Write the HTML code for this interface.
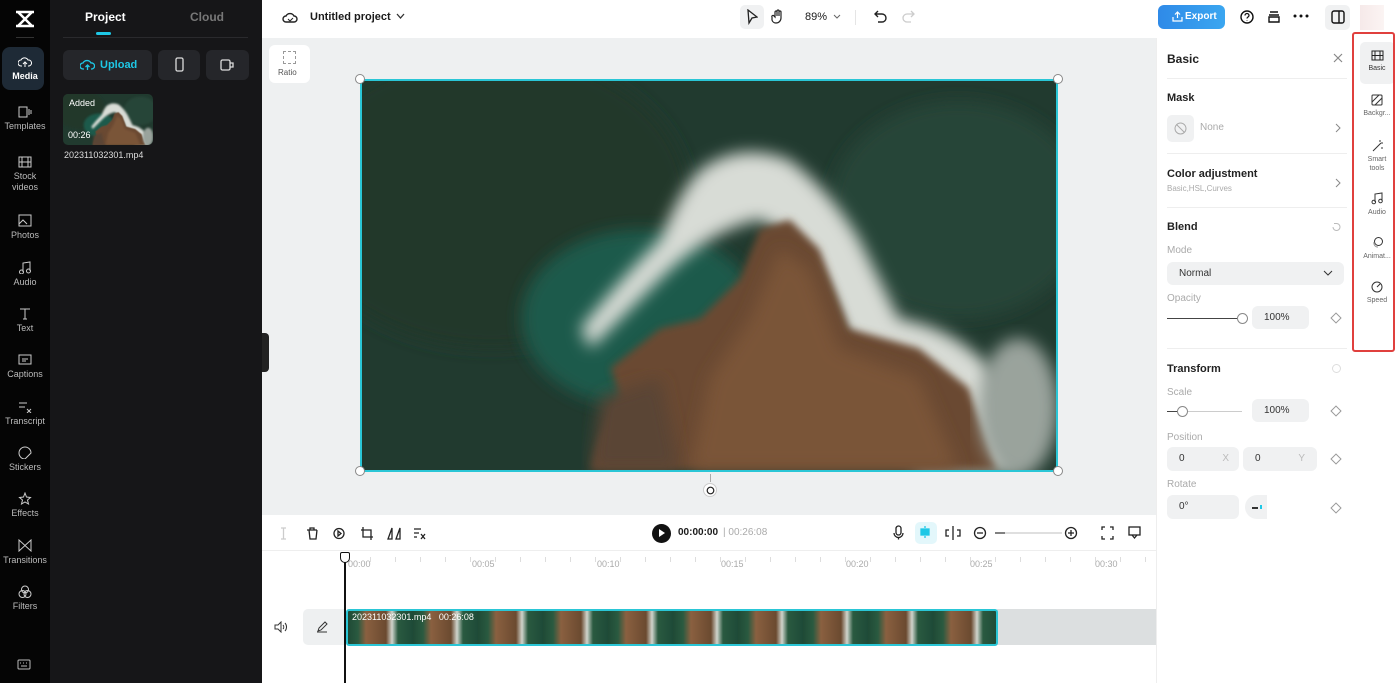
<!DOCTYPE html>
<html><head><meta charset="utf-8"><style>
*{box-sizing:border-box;margin:0;padding:0}
body{width:1398px;height:683px;overflow:hidden;font-family:"Liberation Sans",Arial,sans-serif;background:#fff;position:relative;font-size:12px;color:#1a1a1a}
.abs{position:absolute}
#nav{left:0;top:0;width:50px;height:683px;background:#050505}
.ni{position:absolute;left:0;width:50px;text-align:center;color:#bbb;font-size:9px;line-height:11px}
.ni svg{display:block;margin:0 auto 3px}
#panel{left:50px;top:0;width:212px;height:683px;background:#161618}
#top{left:262px;top:0;width:1136px;height:38px;background:#fff}
#canvas{left:262px;top:38px;width:894px;height:477px;background:#eef0f1}
#rp{left:1156px;top:38px;width:200px;height:645px;background:#fff;border-left:1px solid #eee}
.lbl{position:absolute;color:#aaa;font-size:11px}
.h{position:absolute;font-weight:bold;font-size:11px;color:#222}
.box{position:absolute;background:#f0f1f2;border-radius:6px;font-size:11px;color:#333;padding-left:12px;line-height:24px}
.dia{position:absolute;width:8px;height:8px;border:1px solid #999;transform:rotate(45deg)}
.sep{position:absolute;left:10px;width:180px;height:1px;background:#eee}
.si{position:absolute;left:1358px;width:38px;text-align:center;font-size:7px;color:#666;line-height:9px}
.si svg{display:block;margin:0 auto 3px}
.tk{position:absolute;top:559px;font-size:9px;color:#aaa}
.h4{position:absolute;width:10px;height:10px;border-radius:50%;background:#fff;border:1px solid #888}
</style></head><body>
<div id="nav" class="abs">
 <svg class="abs" style="left:13px;top:9px" width="24" height="20" viewBox="0 0 24 20"><path d="M3 3h18M3 17h18M5 3l14 14M19 3L5 17" stroke="#fff" stroke-width="2.5" fill="none"/></svg>
 <div class="abs" style="left:16px;top:37px;width:18px;height:1px;background:#333"></div>
 <div class="abs" style="left:2px;top:47px;width:42px;height:43px;background:#1e2a36;border-radius:8px"></div>
 <div class="ni" style="top:56px;color:#fff;font-weight:bold"><svg width="14" height="12" viewBox="0 0 14 12"><path d="M4 10H3a3 3 0 010-6 4 4 0 017 0 3 3 0 011 6h-1M7 11V6M5 8l2-2 2 2" stroke="#fff" fill="none"/></svg>Media</div>
 <div class="ni" style="top:106px"><svg width="14" height="12"><rect x="1" y="1" width="8" height="10" stroke="#ccc" fill="none"/><path d="M11 3v6M13 4v4" stroke="#ccc"/></svg>Templates</div>
 <div class="ni" style="top:156px"><svg width="14" height="12"><rect x="1" y="1" width="12" height="10" stroke="#ccc" fill="none"/><path d="M4 1v10M10 1v10M1 6h12" stroke="#ccc"/></svg>Stock<br>videos</div>
 <div class="ni" style="top:214px"><svg width="14" height="13"><rect x="1" y="1" width="12" height="11" stroke="#ccc" fill="none"/><path d="M1 10l4-4 4 4" stroke="#ccc" fill="none"/></svg>Photos</div>
 <div class="ni" style="top:261px"><svg width="14" height="13"><path d="M5 11V2l7-1v9" stroke="#ccc" fill="none"/><circle cx="3.5" cy="11" r="2" stroke="#ccc" fill="none"/><circle cx="10.5" cy="10" r="2" stroke="#ccc" fill="none"/></svg>Audio</div>
 <div class="ni" style="top:307px"><svg width="14" height="13"><path d="M2 2h10M7 2v10M5 12h4" stroke="#ccc" fill="none"/></svg>Text</div>
 <div class="ni" style="top:353px"><svg width="14" height="13"><rect x="1" y="2" width="12" height="9" stroke="#ccc" fill="none"/><path d="M4 6h6M4 8h4" stroke="#ccc"/></svg>Captions</div>
 <div class="ni" style="top:400px"><svg width="14" height="13"><path d="M1 3h8M1 7h6M9 9l4 4M13 9l-4 4" stroke="#ccc" fill="none"/></svg>Transcript</div>
 <div class="ni" style="top:446px"><svg width="14" height="13"><path d="M7 1a6 6 0 100 12l6-6A6 6 0 007 1z" stroke="#ccc" fill="none"/></svg>Stickers</div>
 <div class="ni" style="top:492px"><svg width="14" height="13"><path d="M7 1l1.5 4 4 .5-3 2.5 1 4L7 10l-3.5 2 1-4-3-2.5 4-.5z" stroke="#ccc" fill="none"/></svg>Effects</div>
 <div class="ni" style="top:539px"><svg width="14" height="13"><path d="M1 1v11l6-5.5L13 12V1L7 6.5z" stroke="#ccc" fill="none"/></svg>Transitions</div>
 <div class="ni" style="top:585px"><svg width="14" height="13"><circle cx="7" cy="4.5" r="3.5" stroke="#ccc" fill="none"/><circle cx="4.5" cy="9" r="3.5" stroke="#ccc" fill="none"/><circle cx="9.5" cy="9" r="3.5" stroke="#ccc" fill="none"/></svg>Filters</div>
 <svg class="abs" style="left:17px;top:659px" width="14" height="11"><rect x="1" y="1" width="12" height="9" rx="1" stroke="#bbb" fill="none"/><path d="M3 4h1M6 4h1M9 4h1M4 7h6" stroke="#bbb"/></svg>
</div>
<div id="panel" class="abs">
 <div class="abs" style="left:35px;top:10px;color:#fff;font-weight:bold;font-size:12px">Project</div>
 <div class="abs" style="left:140px;top:10px;color:#777;font-weight:bold;font-size:12px">Cloud</div>
 <div class="abs" style="left:46px;top:32px;width:15px;height:3px;background:#1ec8e6;border-radius:2px"></div>
 <div class="abs" style="left:13px;top:37px;width:185px;height:1px;background:#2a2a2d"></div>
 <div class="abs" style="left:13px;top:50px;width:89px;height:30px;background:#25262a;border-radius:6px;color:#1ec8e6;font-weight:bold;font-size:11px;line-height:30px;padding-left:37px">Upload</div>
 <svg class="abs" style="left:30px;top:58px" width="15" height="13"><path d="M4 11H3a3 3 0 010-6 4.5 4.5 0 018 0 3 3 0 011 6h-1M7.5 12V7M5.5 9l2-2 2 2" stroke="#1ec8e6" stroke-width="1.3" fill="none"/></svg>
 <div class="abs" style="left:108px;top:50px;width:42px;height:30px;background:#25262a;border-radius:6px"></div>
 <svg class="abs" style="left:125px;top:57px" width="9" height="15"><rect x="1" y="1" width="7" height="13" rx="1.5" stroke="#ddd" stroke-width="1.3" fill="none"/></svg>
 <div class="abs" style="left:156px;top:50px;width:43px;height:30px;background:#25262a;border-radius:6px"></div>
 <svg class="abs" style="left:170px;top:59px" width="15" height="12"><rect x="1" y="1" width="9" height="10" rx="1.5" stroke="#ddd" stroke-width="1.3" fill="none"/><path d="M10 4h3v4h-3" stroke="#ddd" stroke-width="1.3" fill="none"/></svg>
 <svg class="abs" style="left:13px;top:94px;border-radius:5px" width="90" height="51" viewBox="0 0 698 393" preserveAspectRatio="none"><use href="#vid"/></svg>
 <div class="abs" style="left:19px;top:98px;color:#fff;font-size:9px">Added</div>
 <div class="abs" style="left:18px;top:130px;color:#fff;font-size:9px">00:26</div>
 <div class="abs" style="left:14px;top:150px;color:#ddd;font-size:9px">202311032301.mp4</div>
</div>
<div class="abs" style="left:262px;top:333px;width:7px;height:39px;background:#222;border-radius:0 4px 4px 0;z-index:3"></div>
<div id="top" class="abs">
 <svg class="abs" style="left:20px;top:9px" width="16" height="16"><path d="M4 13a3 3 0 010-6 4.5 4.5 0 018 0 3 3 0 010 6z" stroke="#222" stroke-width="1.4" fill="none"/><path d="M6 10l2 2 3-3" stroke="#222" fill="none"/></svg>
 <div class="abs" style="left:48px;top:11px;font-weight:bold;font-size:11px">Untitled project</div>
 <svg class="abs" style="left:134px;top:13px" width="9" height="7"><path d="M1 1l3.5 4L8 1" stroke="#333" stroke-width="1.3" fill="none"/></svg>
 <div class="abs" style="left:478px;top:5px;width:24px;height:24px;background:#f0f1f2;border-radius:5px"></div>
 <svg class="abs" style="left:484px;top:9px" width="12" height="16"><path d="M2 1l9 7-5 1-3 5z" stroke="#222" stroke-width="1.3" fill="none"/></svg>
 <svg class="abs" style="left:509px;top:9px" width="14" height="15"><path d="M4 8V3a1 1 0 012 0v4V2a1 1 0 012 0v5V3a1 1 0 012 0v6a5 5 0 01-5 5 4 4 0 01-4-3L1 8a1 1 0 012-1z" stroke="#222" stroke-width="1.2" fill="none"/></svg>
 <div class="abs" style="left:543px;top:11px;font-size:11px">89%</div>
 <svg class="abs" style="left:571px;top:14px" width="8" height="6"><path d="M1 1l3 3 3-3" stroke="#666" fill="none"/></svg>
 <div class="abs" style="left:593px;top:10px;width:1px;height:15px;background:#e5e5e5"></div>
 <svg class="abs" style="left:612px;top:10px" width="13" height="13"><path d="M4 1L1 4l3 3M1 4h7a4 4 0 010 8H4" stroke="#222" stroke-width="1.4" fill="none"/></svg>
 <svg class="abs" style="left:640px;top:10px" width="13" height="13"><path d="M9 1l3 3-3 3M12 4H5a4 4 0 000 8h4" stroke="#ccc" stroke-width="1.3" fill="none"/></svg>
 <div class="abs" style="left:896px;top:5px;width:67px;height:24px;background:linear-gradient(90deg,#2f8ae8,#3aa6f0);border-radius:6px;color:#fff;font-weight:bold;font-size:10px;line-height:24px;padding-left:27px">Export</div>
 <svg class="abs" style="left:910px;top:11px" width="11" height="11"><path d="M5.5 1v6M3 3.5l2.5-2.5L8 3.5M1 6v4h9V6" stroke="#fff" stroke-width="1.2" fill="none"/></svg>
 <svg class="abs" style="left:978px;top:10px" width="14" height="14"><circle cx="7" cy="7" r="6" stroke="#111" stroke-width="1.4" fill="none"/><path d="M5 5.5a2 2 0 114 0c0 1.5-2 1.5-2 3M7 10.5v.5" stroke="#111" stroke-width="1.3" fill="none"/></svg>
 <svg class="abs" style="left:1005px;top:10px" width="14" height="14"><path d="M3 2h8M2 5h10M2 7h10v5H2z" stroke="#111" stroke-width="1.4" fill="none"/></svg>
 <svg class="abs" style="left:1031px;top:14px" width="16" height="4"><circle cx="2" cy="2" r="1.5" fill="#111"/><circle cx="8" cy="2" r="1.5" fill="#111"/><circle cx="14" cy="2" r="1.5" fill="#111"/></svg>
 <div class="abs" style="left:1063px;top:5px;width:25px;height:25px;background:#f0f1f2;border-radius:5px"></div>
 <svg class="abs" style="left:1069px;top:10px" width="14" height="14"><rect x="1" y="1" width="12" height="12" rx="2" stroke="#111" stroke-width="1.4" fill="none"/><path d="M8 1v12" stroke="#111" stroke-width="1.4"/></svg>
 <div class="abs" style="left:1098px;top:5px;width:24px;height:25px;background:linear-gradient(90deg,#f6e9e9,#fbf4f3)"></div>
</div>
<div id="canvas" class="abs">
 <div class="abs" style="left:7px;top:7px;width:41px;height:38px;background:#fff;border-radius:6px"></div>
 <div class="abs" style="left:21px;top:13px;width:13px;height:13px;border:1px dashed #999"></div>
 <div class="abs" style="left:16px;top:30px;font-size:8px;color:#555">Ratio</div>
 <div class="abs" style="left:98px;top:41px;width:698px;height:393px;border:2px solid #2ac6d6;overflow:hidden">
 <svg width="694" height="389" viewBox="0 0 698 393" preserveAspectRatio="none" style="display:block">
  <defs>
   <filter id="b8"><feGaussianBlur stdDeviation="8"/></filter>
   <filter id="b4"><feGaussianBlur stdDeviation="4"/></filter>
   <g id="vid">
    <rect width="698" height="393" fill="#213a2f"/>
    <ellipse cx="130" cy="120" rx="200" ry="150" fill="#23382c" filter="url(#b8)"/>
    <ellipse cx="280" cy="240" rx="120" ry="90" fill="#1f5a4b" filter="url(#b8)"/>
    <ellipse cx="600" cy="130" rx="130" ry="110" fill="#264537" filter="url(#b8)"/>
    <path d="M340 90 Q380 60 430 80 Q470 110 500 160 Q520 200 540 240 Q600 250 640 300 L660 393 L560 393 Q500 300 470 220 Q440 160 400 140 Q350 150 300 200 Q260 240 230 270 L220 250 Q260 200 300 160 Q320 110 340 90Z" fill="#d8dcd6" filter="url(#b8)"/>
    <path d="M400 150 L430 140 L460 170 L490 250 L560 270 L610 310 L640 393 L230 393 L240 360 L260 320 L250 290 L300 250 L340 240 L380 200 Z" fill="#6b4a32" filter="url(#b4)"/>
    <path d="M420 170 L450 190 L480 270 L560 300 L600 393 L330 393 L350 300 L390 240 Z" fill="#7a5438" filter="url(#b8)"/>
    <path d="M240 320 L300 300 L320 393 L230 393Z" fill="#5a4535" filter="url(#b8)"/>
    <ellipse cx="660" cy="330" rx="40" ry="70" fill="#9aa39c" filter="url(#b8)"/>
   </g>
  </defs>
  <use href="#vid"/>
 </svg>
 </div>
 <div class="h4" style="left:93px;top:36px"></div><div class="h4" style="left:791px;top:36px"></div>
 <div class="h4" style="left:93px;top:428px"></div><div class="h4" style="left:791px;top:428px"></div>
 <div class="abs" style="left:448px;top:436px;width:1px;height:8px;background:#aaa"></div>
 <div class="abs" style="left:441px;top:445px;width:14px;height:14px;border-radius:50%;background:#fff;border:1px solid #ccc"></div>
 <svg class="abs" style="left:444px;top:448px" width="9" height="9"><circle cx="4.5" cy="4.5" r="3.3" stroke="#222" stroke-width="1.2" fill="none"/></svg>
</div>
<!-- timeline -->
<div class="abs" style="left:262px;top:515px;width:894px;height:168px;background:#fff"></div>
<div class="abs" style="left:262px;top:550px;width:894px;height:1px;background:#eee"></div>
<svg class="abs" style="left:278px;top:526px" width="150" height="15" fill="none" stroke="#222" stroke-width="1.3">
 <path d="M3 2h5M3 13h5M5.5 2v11" stroke="#ccc"/>
 <path d="M29 4h10M31 4l1 9h6l1-9M32 4V2h4v2"/>
 <circle cx="61" cy="7.5" r="5"/><path d="M60 5l3 2.5-3 2.5z"/>
 <path d="M85 1v10h10M83 4h10v10"/>
 <path d="M110 13l4-11v11zM118 13l4-11v11z"/>
 <path d="M136 3h7M136 7h5M136 11h3M143 8l4 5M147 8l-4 5"/>
</svg>
<div class="abs" style="left:652px;top:524px;width:19px;height:19px;border-radius:50%;background:#111"></div>
<div class="abs" style="left:659px;top:529px;width:0;height:0;border-left:6px solid #fff;border-top:4.5px solid transparent;border-bottom:4.5px solid transparent"></div>
<div class="abs" style="left:678px;top:527px;font-size:10px;font-weight:bold">00:00:00</div>
<div class="abs" style="left:723px;top:527px;font-size:10px;color:#aaa">| 00:26:08</div>
<div class="abs" style="left:915px;top:522px;width:22px;height:22px;border-radius:5px;background:#e3f7fb"></div>
<svg class="abs" style="left:892px;top:525px" width="260" height="16" fill="none" stroke="#222" stroke-width="1.3">
 <rect x="4" y="1" width="5" height="9" rx="2.5"/><path d="M2 8a4.5 4.5 0 009 0M6.5 12.5v2"/>
 <rect x="29" y="4" width="8" height="6" fill="#1ec8e6" stroke="#1ec8e6"/><path d="M33 1v2M33 11v2" stroke="#1ec8e6"/>
 <path d="M61 1v14M57 5h-3v6h3M65 5h3v6h-3"/>
 <circle cx="88" cy="8" r="5.5"/><path d="M85 8h6"/>
 <path d="M103 8h67" stroke="#ccc"/><path d="M103 8h10" stroke="#444"/>
 <circle cx="179" cy="8" r="5.5"/><path d="M176 8h6M179 5v6"/>
 <path d="M210 5V2h3M218 2h3v3M221 11v3h-3M213 14h-3v-3"/>
 <rect x="237" y="2" width="11" height="8"/><path d="M240 10l2.5 3 2.5-3"/>
</svg>
<div class="tk" style="left:348px">00:00</div><div class="tk" style="left:472px">00:05</div><div class="tk" style="left:597px">00:10</div><div class="tk" style="left:721px">00:15</div><div class="tk" style="left:846px">00:20</div><div class="tk" style="left:970px">00:25</div><div class="tk" style="left:1095px">00:30</div>
<div class="abs" style="left:345px;top:557px;width:810px;height:5px;background:repeating-linear-gradient(90deg,#ddd 0 1px,transparent 1px 25px)"></div>
<svg class="abs" style="left:274px;top:621px" width="14" height="12"><path d="M1 4h3l3-3v10L4 8H1z" stroke="#333" fill="none"/><path d="M9 4a3 3 0 010 4M11 2a6 6 0 010 8" stroke="#333" fill="none"/></svg>
<div class="abs" style="left:303px;top:609px;width:42px;height:36px;background:#eef0f1;border-radius:5px 0 0 5px"></div>
<svg class="abs" style="left:316px;top:621px" width="12" height="12"><path d="M2 10l1-3 6-6 2 2-6 6zM1 11h10" stroke="#333" fill="none"/></svg>
<div class="abs" style="left:997px;top:609px;width:159px;height:36px;background:#dcdfe0"></div>
<div class="abs" style="left:346px;top:609px;width:652px;height:37px;border:2px solid #2ac6d6;border-radius:3px;
 background:repeating-linear-gradient(90deg,#1f4a36 0,#2a5a40 10px,#8a6040 18px,#6b4a30 38px,#d0d4cc 44px,#2a5a40 50px,#1e4a38 65px);"></div>
<div class="abs" style="left:352px;top:612px;font-size:9px;color:#fff">202311032301.mp4 &nbsp; 00:26:08</div>
<div class="abs" style="left:344px;top:556px;width:2px;height:127px;background:#111"></div>
<div class="abs" style="left:340px;top:552px;width:10px;height:11px;border:1.5px solid #111;border-radius:2px 2px 5px 5px;background:#fff"></div>
<!-- right panel -->
<div id="rp" class="abs">
 <div class="h" style="left:10px;top:14px;font-size:12px">Basic</div>
 <svg class="abs" style="left:176px;top:15px" width="10" height="10"><path d="M1 1l8 8M9 1l-8 8" stroke="#888" stroke-width="1.2"/></svg>
 <div class="sep" style="top:40px"></div>
 <div class="h" style="left:10px;top:54px">Mask</div>
 <div class="abs" style="left:10px;top:77px;width:27px;height:27px;background:#f0f1f2;border-radius:5px"></div>
 <svg class="abs" style="left:17px;top:84px" width="13" height="13"><circle cx="6.5" cy="6.5" r="5.5" stroke="#aaa" fill="none"/><path d="M2.5 2.5l8 8" stroke="#aaa"/></svg>
 <div class="lbl" style="left:43px;top:84px;font-size:10px">None</div>
 <svg class="abs" style="left:178px;top:85px" width="6" height="10"><path d="M1 1l4 4-4 4" stroke="#888" fill="none"/></svg>
 <div class="sep" style="top:115px"></div>
 <div class="h" style="left:10px;top:130px">Color adjustment</div>
 <div class="lbl" style="left:10px;top:146px;font-size:8px">Basic,HSL,Curves</div>
 <svg class="abs" style="left:178px;top:140px" width="6" height="10"><path d="M1 1l4 4-4 4" stroke="#888" fill="none"/></svg>
 <div class="sep" style="top:169px"></div>
 <div class="h" style="left:10px;top:183px">Blend</div>
 <svg class="abs" style="left:174px;top:184px" width="10" height="10"><path d="M2 5a3.5 3.5 0 103.5-3.5H3" stroke="#bbb" fill="none"/></svg>
 <div class="lbl" style="left:10px;top:207px;font-size:10px">Mode</div>
 <div class="box" style="left:10px;top:224px;width:177px;height:23px;line-height:23px;font-size:10px">Normal</div>
 <svg class="abs" style="left:166px;top:232px" width="10" height="7"><path d="M1 1l4 4 4-4" stroke="#333" fill="none"/></svg>
 <div class="lbl" style="left:10px;top:255px;font-size:10px">Opacity</div>
 <div class="abs" style="left:10px;top:280px;width:75px;height:1px;background:#444"></div>
 <div class="abs" style="left:80px;top:275px;width:11px;height:11px;border-radius:50%;background:#fff;border:1px solid #888"></div>
 <div class="box" style="left:95px;top:268px;width:57px;height:23px;line-height:23px;font-size:10px">100%</div>
 <div class="dia" style="left:175px;top:276px"></div>
 <div class="sep" style="top:310px"></div>
 <div class="h" style="left:10px;top:325px">Transform</div>
 <div class="abs" style="left:175px;top:326px;width:9px;height:9px;border-radius:50%;border:1px solid #ddd"></div>
 <div class="lbl" style="left:10px;top:349px;font-size:10px">Scale</div>
 <div class="abs" style="left:10px;top:373px;width:75px;height:1px;background:#ccc"></div>
 <div class="abs" style="left:10px;top:373px;width:16px;height:1px;background:#444"></div>
 <div class="abs" style="left:20px;top:368px;width:11px;height:11px;border-radius:50%;background:#fff;border:1px solid #888"></div>
 <div class="box" style="left:95px;top:361px;width:57px;height:23px;line-height:23px;font-size:10px">100%</div>
 <div class="dia" style="left:175px;top:369px"></div>
 <div class="lbl" style="left:10px;top:394px;font-size:10px">Position</div>
 <div class="box" style="left:10px;top:409px;width:72px;height:24px;font-size:10px">0<span style="position:absolute;right:10px;color:#bbb">X</span></div>
 <div class="box" style="left:86px;top:409px;width:74px;height:24px;font-size:10px">0<span style="position:absolute;right:12px;color:#bbb">Y</span></div>
 <div class="dia" style="left:175px;top:417px"></div>
 <div class="lbl" style="left:10px;top:441px;font-size:10px">Rotate</div>
 <div class="box" style="left:10px;top:457px;width:72px;height:24px;font-size:10px">0°</div>
 <div class="abs" style="left:88px;top:457px;width:22px;height:24px;border-radius:12px 0 0 12px;background:#f0f1f2"></div>
 <div class="abs" style="left:95px;top:469px;width:6px;height:1.5px;background:#333"></div>
 <div class="abs" style="left:103px;top:467px;width:1.5px;height:4px;background:#1ec8e6"></div>
 <div class="dia" style="left:175px;top:466px"></div>
</div>
<!-- side tabs -->
<div class="abs" style="left:1356px;top:38px;width:42px;height:645px;background:#fff"></div>
<div class="abs" style="left:1360px;top:42px;width:35px;height:42px;background:#f0f1f2;border-radius:5px"></div>
<div class="si" style="top:50px;color:#333"><svg width="13" height="11"><rect x="1" y="1" width="11" height="9" stroke="#222" fill="none"/><path d="M4 1v9M9 1v9M1 5.5h11" stroke="#222"/></svg>Basic</div>
<div class="si" style="top:94px"><svg width="12" height="12"><rect x="1" y="1" width="10" height="10" rx="1" stroke="#333" fill="none"/><path d="M1 8l7-7M4 11l7-7" stroke="#333"/></svg>Backgr...</div>
<div class="si" style="top:139px"><svg width="13" height="13"><path d="M2 12l8-8M9 1v2M12 4h-2M11 8v2" stroke="#333" fill="none"/></svg>Smart<br>tools</div>
<div class="si" style="top:192px"><svg width="12" height="13"><path d="M4 10V2l7-1v8" stroke="#333" fill="none"/><circle cx="2.8" cy="10" r="1.8" stroke="#333" fill="none"/><circle cx="9.5" cy="9" r="1.8" stroke="#333" fill="none"/></svg>Audio</div>
<div class="si" style="top:236px"><svg width="13" height="13"><circle cx="7.5" cy="5.5" r="4" stroke="#333" fill="none"/><path d="M3 6a4 4 0 004 5" stroke="#999" fill="none"/></svg>Animat...</div>
<div class="si" style="top:281px"><svg width="12" height="12"><circle cx="6" cy="6" r="5" stroke="#333" fill="none"/><path d="M6 6l3-3" stroke="#333"/></svg>Speed</div>
<div class="abs" style="left:1352px;top:32px;width:43px;height:320px;border:2px solid #e0403e;border-radius:3px"></div>
</body></html>
